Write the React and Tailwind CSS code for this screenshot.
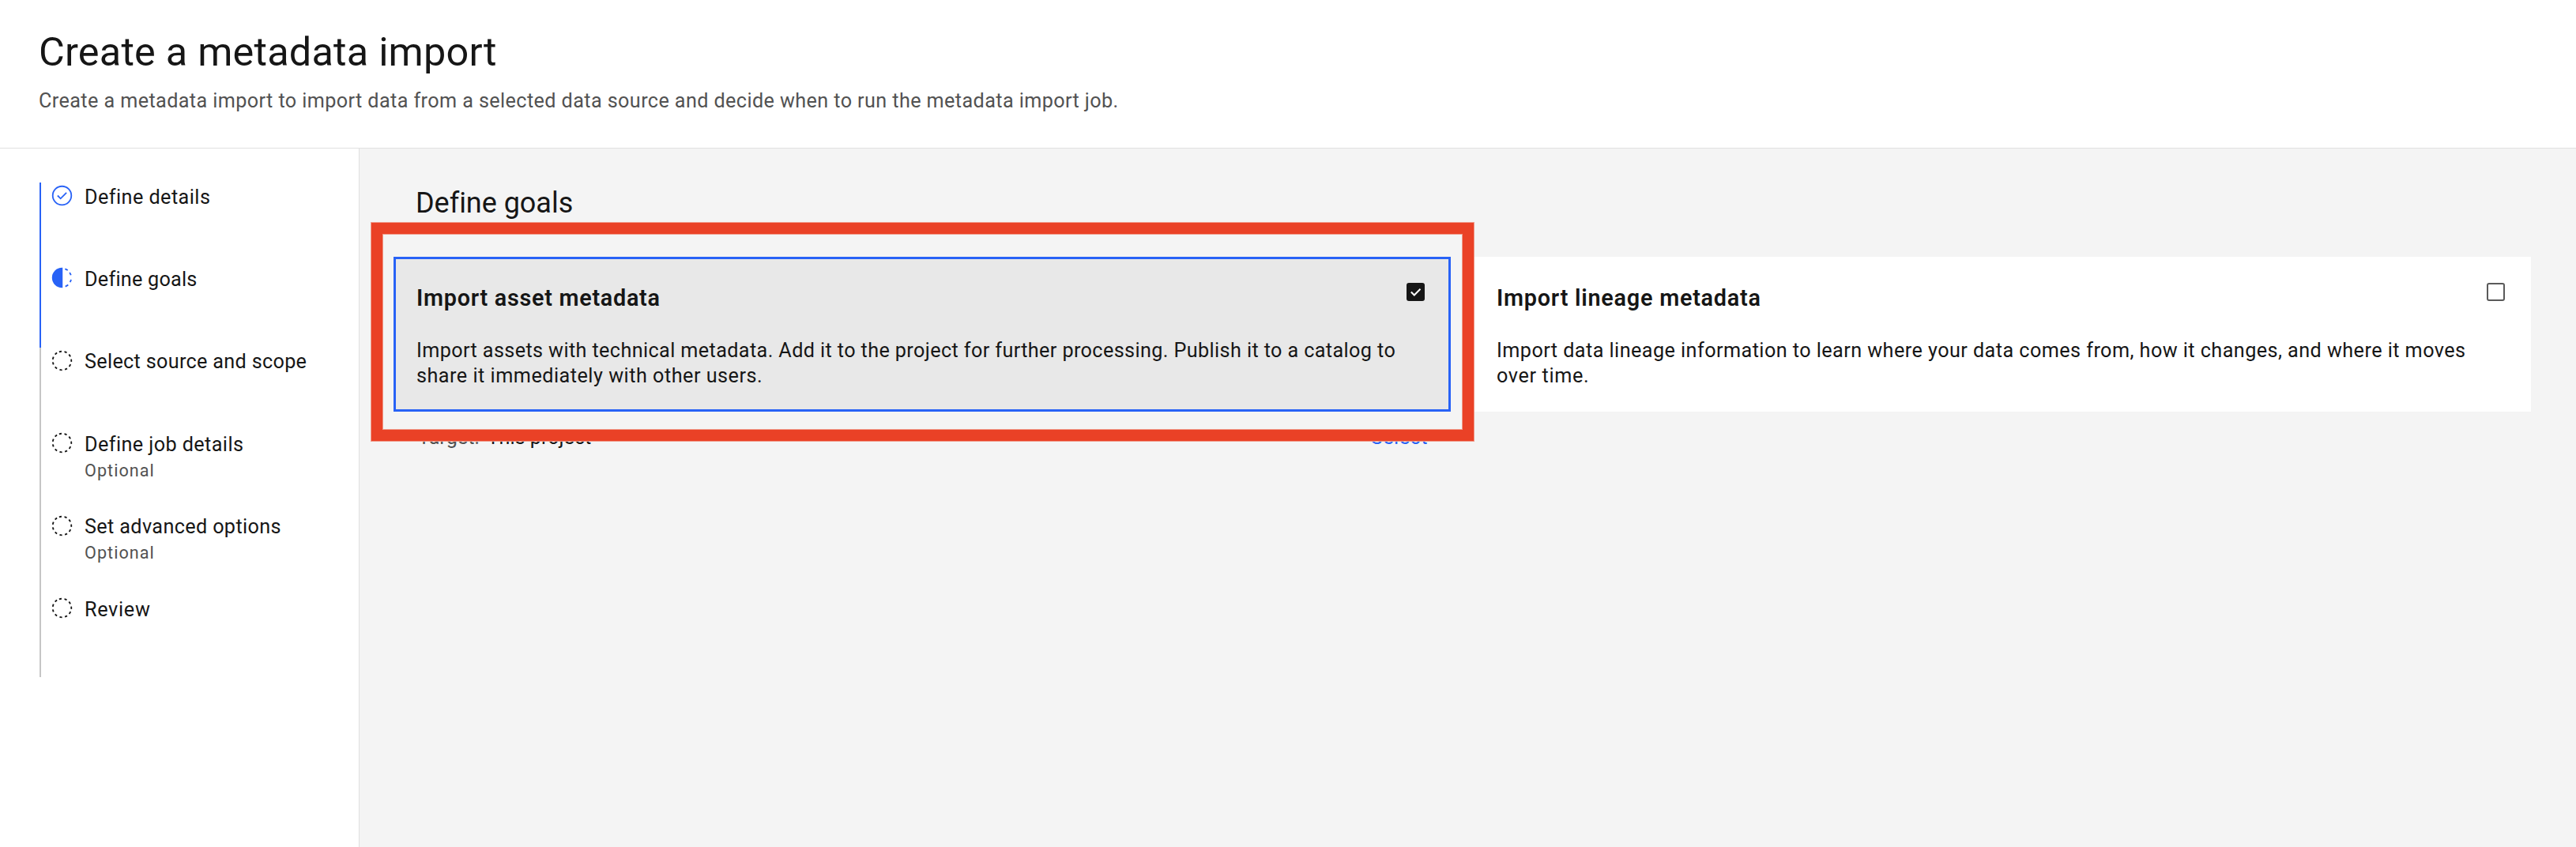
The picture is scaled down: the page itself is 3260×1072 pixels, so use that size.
const BLUE = "#2862f6";

function CompleteIcon() {
  return (
    <svg viewBox="0 0 16 16" className="size-[29px]" fill="none" stroke={BLUE}>
      <circle cx="8" cy="8" r="6.5" />
      <path d="M4.9 8 7 10.1 11.1 6" />
    </svg>
  );
}

function CurrentIcon() {
  return (
    <svg viewBox="0 0 16 16" className="size-[29px]" fill="none" stroke={BLUE}>
      <path d="M8.4 1v14H8A7 7 0 0 1 8 1Z" fill={BLUE} stroke="none" />
      <path d="M10.1 1.9q1 .3 1.9.9M13.3 4.4q.6.9.9 1.8M14.3 9.3q-.2 1-.7 1.8M12.3 13q-.9.7-2 1.1" />
    </svg>
  );
}

function PendingIcon() {
  return (
    <svg viewBox="0 0 16 16" className="size-[29px]" fill="none" stroke="#161616">
      <circle cx="8" cy="8" r="6.5" strokeDasharray="1.75 1.963" transform="rotate(-108 8 8)" />
    </svg>
  );
}

const ICONS = { complete: CompleteIcon, current: CurrentIcon, pending: PendingIcon };

const STEPS = [
  { label: "Define details", state: "complete", tracking: "tracking-[0.45px]" },
  { label: "Define goals", state: "current", tracking: "tracking-[0.25px]" },
  { label: "Select source and scope", state: "pending", tracking: "tracking-[0.32px]" },
  { label: "Define job details", state: "pending", optional: true, tracking: "tracking-[0.42px]" },
  { label: "Set advanced options", state: "pending", optional: true, tracking: "tracking-[0.37px]" },
  { label: "Review", state: "pending", tracking: "tracking-[0.7px]" },
];

function Step({ step, index }) {
  const Icon = ICONS[step.state];
  return (
    <li
      className={`flex h-[104.4px] border-l-2 pl-3 ${
        index < 2 ? "border-[#2862f6]" : "border-[#c6c6c6]"
      }`}
    >
      <div className="mt-[2px] shrink-0">
        <Icon />
      </div>
      <div className="ml-[14px] mt-[2.6px]">
        <div className={`text-[25.2px] leading-8 ${step.tracking}`}>{step.label}</div>
        {step.optional && (
          <div className="mt-[0.8px] text-[21.6px] leading-8 tracking-[1.03px] text-[#525252]">
            Optional
          </div>
        )}
      </div>
    </li>
  );
}

function Checkbox({ checked }) {
  return checked ? (
    <span className="flex size-[23px] items-center justify-center rounded-[3px] bg-[#161616]">
      <svg viewBox="0 0 23 23" className="size-[23px]" fill="none" stroke="#fff" strokeWidth="2">
        <path d="m5.8 11.5 4 4L17.5 7.8" />
      </svg>
    </span>
  ) : (
    <span className="block size-[23px] rounded-[3px] border-2 border-[#5a5a5a]" />
  );
}

function GoalCard({ title, titleTracking, checked, children }) {
  return (
    <div
      className={`flex h-[196px] border-3 pl-[26px] pr-[30px] ${
        checked ? "border-[#2862f6] bg-[#e8e8e8]" : "border-white bg-white"
      }`}
    >
      <div className="flex-1 whitespace-nowrap pt-[31px]">
        <h3 className={`text-[28.8px] font-semibold leading-9 ${titleTracking}`}>{title}</h3>
        <div className="mt-[32.6px] text-[25.2px] leading-8">{children}</div>
      </div>
      <div className="pt-[30px]">
        <Checkbox checked={checked} />
      </div>
    </div>
  );
}

function HighlightFrame() {
  return (
    <div className="pointer-events-none absolute -left-[29px] -top-11 h-[278px] w-[1397px] border border-[#f09a8a]">
      <div className="h-full border-14 border-[#ea4126]">
        <div className="h-full border border-[#f09a8a]" />
      </div>
    </div>
  );
}

export default function App() {
  return (
    <div className="flex h-[1072px] w-[3260px] flex-col overflow-hidden bg-white font-['Roboto',sans-serif] text-[#161616]">
      <header className="h-[188px] border-b border-[#e0e0e0] pl-[49px] pt-8">
        <h1 className="text-[50.4px] leading-[67px] tracking-[0.22px]">Create a metadata import</h1>
        <p className="mt-[12.6px] text-[25.2px] leading-8 tracking-[0.4px] text-[#525252]">
          Create a metadata import to import data from a selected data source and decide when to run the
          metadata import job.
        </p>
      </header>

      <div className="flex flex-1">
        <nav className="w-[455px] shrink-0 border-r border-[#e0e0e0] pl-[50px] pt-[43px]">
          <ol>
            {STEPS.map((step, i) => (
              <Step key={step.label} step={step} index={i} />
            ))}
          </ol>
        </nav>

        <main className="flex-1 bg-[#f4f4f4] pl-[43px] pr-[57px] pt-[45px]">
          <h2 className="pl-7 text-[36px] leading-[48px] tracking-[-0.03px]">Define goals</h2>
          <div className="mt-11 grid grid-cols-[1338px_1338px] justify-between">
            <div className="relative">
              <GoalCard title="Import asset metadata" titleTracking="tracking-[0.72px]" checked>
                <p className="tracking-[0.39px]">
                  Import assets with technical metadata. Add it to the project for further processing.
                  Publish it to a catalog to
                </p>
                <p className="tracking-[0.5px]">share it immediately with other users.</p>
              </GoalCard>
              <div className="flex justify-between pl-[31px] pr-[29px] pt-[16.6px] text-[25.2px] leading-8">
                <div>
                  <span className="mr-[10px] text-[#525252]">Target:</span>
                  <span>This project</span>
                </div>
                <span className="tracking-[0.5px] text-[#2862f6]">Select</span>
              </div>
              <HighlightFrame />
            </div>
            <GoalCard title="Import lineage metadata" titleTracking="tracking-[0.76px]">
              <p className="tracking-[0.445px]">
                Import data lineage information to learn where your data comes from, how it changes, and
                where it moves
              </p>
              <p className="tracking-[0.65px]">over time.</p>
            </GoalCard>
          </div>
        </main>
      </div>
    </div>
  );
}
